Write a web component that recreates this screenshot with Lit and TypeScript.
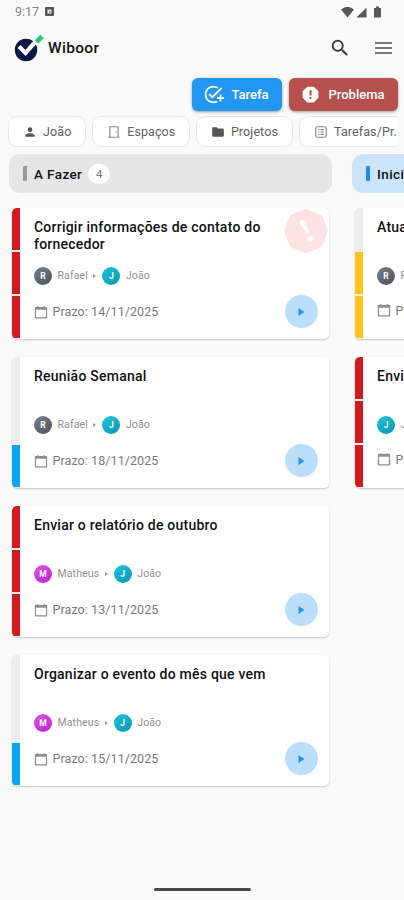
import { LitElement, html, css, svg, nothing } from "lit";
import { customElement, property } from "lit/decorators.js";
import { classMap } from "lit/directives/class-map.js";

interface Person { name: string; tone: string; }
interface Task { title: string; people: Person[]; due: string; level: number; tone: string; alert?: boolean; }

const rafael: Person = { name: "Rafael", tone: "slate" };
const joao: Person = { name: "João", tone: "cyan" };
const matheus: Person = { name: "Matheus", tone: "pink" };

const todo: Task[] = [
  { title: "Corrigir informações de contato do fornecedor", people: [rafael, joao], due: "14/11/2025", level: 3, tone: "red", alert: true },
  { title: "Reunião Semanal", people: [rafael, joao], due: "18/11/2025", level: 1, tone: "blue" },
  { title: "Enviar o relatório de outubro", people: [matheus, joao], due: "13/11/2025", level: 3, tone: "red" },
  { title: "Organizar o evento do mês que vem", people: [matheus, joao], due: "15/11/2025", level: 1, tone: "blue" },
];
const started: Task[] = [
  { title: "Atualizar o cadastro", people: [rafael, joao], due: "17/11/2025", level: 2, tone: "amber" },
  { title: "Enviar proposta", people: [joao], due: "13/11/2025", level: 3, tone: "red" },
];

const shapes = {
  person: svg`<path fill="currentColor" d="M12 12a4 4 0 1 0 0-8 4 4 0 0 0 0 8zm0 2c-2.700 0-8 1.300-8 4v2h16v-2c0-2.700-5.300-4-8-4z"/>`,
  door: svg`<path fill="none" stroke="currentColor" stroke-width="2" d="M2 21h20M5 21V3h14v18M14 12h2"/>`,
  folder: svg`<path fill="currentColor" d="M10 4H4a2 2 0 0 0-2 2v12c0 1.100.9 2 2 2h16a2 2 0 0 0 2-2V8a2 2 0 0 0-2-2h-8z"/>`,
  list: svg`<rect x="3" y="3" width="18" height="18" rx="2" fill="none" stroke="currentColor" stroke-width="2"/><path fill="none" stroke="currentColor" stroke-width="2" d="M7 8h2M11 8h6M7 12h2M11 12h6M7 16h2M11 16h6"/>`,
  calendar: svg`<path fill="none" stroke="currentColor" stroke-width="2" stroke-linejoin="round" d="M2.500 4.500h19V22h-19z"/><path fill="currentColor" d="M2 4h20v4H2zM5.500 1.500h2V5h-2zM16.500 1.500h2V5h-2z"/>`,
  addTask: svg`<path fill="currentColor" d="M22 5.180 10.590 16.600l-4.240-4.240 1.410-1.410 2.830 2.830 10-10zM12 20c-4.410 0-8-3.590-8-8s3.590-8 8-8c1.570 0 3.040.46 4.280 1.250l1.450-1.450A10.020 10.020 0 0 0 12 2C6.480 2 2 6.480 2 12s4.480 10 10 10c1.730 0 3.360-.44 4.780-1.220l-1.500-1.500c-1 .46-2.110.72-3.280.72zm7-5h-3v2h3v3h2v-3h3v-2h-3v-3h-2z"/>`,
  report: svg`<path fill="currentColor" fill-rule="evenodd" d="M15.730 3H8.270L3 8.270v7.460L8.270 21h7.460L21 15.730V8.270zM12 17.300a1.300 1.300 0 1 1 0-2.600 1.300 1.300 0 0 1 0 2.600zm1.200-4.300h-2.400V7h2.400z"/>`,
  search: svg`<path fill="currentColor" d="M15.500 14h-.79l-.28-.27A6.470 6.470 0 0 0 16 9.500 6.500 6.500 0 1 0 9.500 16c1.610 0 3.090-.59 4.230-1.570l.27.28v.79l5 4.990L20.490 19zm-6 0a4.500 4.500 0 1 1 0-9 4.500 4.500 0 0 1 0 9z"/>`,
};
const icon = (name: keyof typeof shapes) => html`<svg class="icon ${name}" viewBox="0 0 24 24">${shapes[name]}</svg>`;

@customElement("task-card")
class TaskCard extends LitElement {
  @property({ attribute: false }) task!: Task;
  @property({ type: Boolean, reflect: true }) compact = false;
  static styles = css`
    :host { display: flex; position: relative; width: 317px; height: 131px; border-radius: 5px; background: #fff; box-shadow: 0 1px 2px #00000036; }
    .level { width: 8px; flex: none; display: flex; flex-direction: column; gap: 2px; border-radius: 5px 0 0 5px; overflow: hidden; background: #fbeeee; }
    .level i { flex: 1; background: #ededed; }
    .level.blue { background: #ededed; }
    .level.amber { background: linear-gradient(#ededed 50%, #fdf3d6 50%); }
    .level.red i.on { background: #d21b20; }
    .level.blue i.on { background: #08a4f5; }
    .level.amber i.on { background: #fdc51c; }
    .body { flex: 1; padding: 11.500px 11px 0 14px; display: flex; flex-direction: column; }
    .title { height: 46.500px; width: 245px; font: 500 14px/17px Roboto, sans-serif; letter-spacing: 0.23px; color: #111; }
    .people { display: flex; align-items: center; height: 20px; font-size: 10.500px; letter-spacing: 0.12px; color: #919191; }
    .avatar { width: 18px; height: 18px; border-radius: 50%; color: #fff; font-size: 8.500px; font-weight: 700; letter-spacing: 0; display: flex; align-items: center; justify-content: center; margin-right: 5.500px; }
    .slate { background: linear-gradient(145deg, #7b818d, #4a505c); }
    .cyan { background: linear-gradient(145deg, #20c2d7, #0798b6); }
    .pink { background: linear-gradient(145deg, #de55e7, #bd20d0); }
    .sep { width: 0; height: 0; border: solid transparent; border-width: 2px 0 2px 3px; border-left-color: #999; margin: 0 6px 0 5.500px; }
    .due { display: flex; align-items: center; gap: 4.500px; margin-top: 17px; height: 18px; font-size: 12.500px; letter-spacing: 0.08px; color: #7a7a7a; }
    :host([compact]) .due { margin-top: 15.500px; }
    .icon { width: 14px; height: 14px; color: #8d8d8d; }
    .play { position: absolute; right: 11px; bottom: 10.500px; width: 33px; height: 33px; border-radius: 50%; background: #bbdefb; display: grid; place-items: center; }
    .play svg { width: 7px; height: 8px; }
    .seal { position: absolute; right: 1px; top: 1px; width: 44px; height: 44px; }
  `;
  render() {
    const t = this.task;
    return html`
      <div class=${classMap({ level: true, [t.tone]: true })}>
        ${[3, 2, 1].map((n) => html`<i class=${classMap({ on: n <= t.level })}></i>`)}
      </div>
      <div class="body">
        <div class="title">${t.title}</div>
        <div class="people">
          ${t.people.map((p, i) => html`${i ? html`<span class="sep"></span>` : nothing}<span class="avatar ${p.tone}">${p.name[0]}</span><span>${p.name}</span>`)}
        </div>
        <div class="due">${icon("calendar")}<span>Prazo: ${t.due}</span></div>
      </div>
      ${t.alert ? html`<svg class="seal" viewBox="0 0 44 44"><path fill="#fde3e2" stroke="#fde3e2" stroke-width="2" stroke-linejoin="round" d="M22 1 29.500 4 37 7 40 14 43 22 40 30 37 37 30 40 22 43 14 40 7 37 4 30 1 22 4 14 7 7 14 4z"/><path fill="#fff" d="M15.500 14c0-3 3-4 4.500-1.500l5.500 10.500-2.500 1.500z"/><circle cx="26" cy="30" r="2.700" fill="#fff"/></svg>` : nothing}
      <div class="play"><svg viewBox="0 0 7 8"><path fill="#2196f3" d="M.5 0v8l6-4z"/></svg></div>
    `;
  }
}

@customElement("app-root")
class AppRoot extends LitElement {
  static styles = css`
    :host { display: flex; flex-direction: column; width: 404px; height: 900px; background: #fafafa; overflow: hidden; font-family: Roboto, sans-serif; color: #111; }
    .status { height: 23px; flex: none; display: flex; align-items: center; padding: 0 23px 0 15px; font-size: 12.500px; color: #858585; }
    .rec { width: 9px; height: 9px; margin-left: 6px; }
    .signals { margin-left: auto; width: 40px; height: 12px; }
    .top { height: 55px; flex: none; display: flex; align-items: center; padding: 0 12.500px 6px 14px; box-sizing: border-box; }
    .logo { width: 30px; height: 28px; }
    .brand { font-size: 15.500px; font-weight: 500; letter-spacing: 0.3px; margin-left: 4px; }
    .search { width: 22px; height: 22px; margin-left: auto; color: #333; }
    .menu { width: 17px; height: 12px; margin-left: 24px; }
    .actions { display: flex; justify-content: flex-end; gap: 7px; padding-right: 6.500px; height: 33px; flex: none; }
    .btn { display: flex; align-items: center; box-sizing: border-box; border-radius: 6px; color: #fff; font-size: 13px; font-weight: 500; letter-spacing: 0; box-shadow: 0 1px 3px #0006; }
    .btn.task { width: 90px; background: #2196f3; padding-left: 11px; gap: 7.500px; }
    .btn.problem { width: 108.500px; background: #b5504d; padding-left: 11px; gap: 7.500px; }
    .addTask { width: 21px; height: 21px; }
    .report { width: 21px; height: 21px; }
    .chips { display: flex; gap: 6.200px; margin: 5px 7px 0 8px; height: 31px; flex: none; overflow: hidden; }
    .chip { flex: none; box-sizing: border-box; display: flex; align-items: center; border: 1px solid #e9e9e9; border-radius: 9px; background: #fff; color: #606060; font-size: 12.500px; letter-spacing: 0.1px; padding-left: 14px; gap: 6px; }
    .chip .icon { width: 14px; height: 14px; color: #555; }
    .chip .door, .chip .list { color: #888; }
    .c1 { width: 78px; } .c2 { width: 97.500px; } .c3 { width: 97px; } .c4 { width: 130px; }
    .board { display: flex; gap: 20px; padding: 7px 0 0 9px; flex: 1; min-height: 0; }
    .column { width: 323px; flex: none; }
    .head { height: 39px; border-radius: 11px; background: #e6e6e6; display: flex; align-items: center; padding-left: 14px; box-sizing: border-box; font-size: 13.500px; font-weight: 500; letter-spacing: 0.4px; }
    .head.active { background: #cce4f9; }
    .mark { width: 4px; height: 15px; border-radius: 1px; background: #999; margin-right: 7px; }
    .active .mark { background: #2089ec; }
    .count { width: 22px; height: 20px; border-radius: 10px; background: #fff; margin-left: 6px; color: #777; font-size: 11.500px; font-weight: 400; letter-spacing: 0; display: grid; place-items: center; }
    .cards { display: flex; flex-direction: column; gap: 18px; padding: 14.500px 0 0 3px; }
    .home { width: 97px; height: 3px; border-radius: 2px; background: #484848; margin: 0 auto 9px; flex: none; }
  `;
  column(name: string, tasks: Task[], active = false) {
    return html`<div class="column">
      <div class=${classMap({ head: true, active })}><span class="mark"></span>${name}${active ? nothing : html`<span class="count">${tasks.length}</span>`}</div>
      <div class="cards">${tasks.map((t) => html`<task-card .task=${t} ?compact=${active}></task-card>`)}</div>
    </div>`;
  }
  render() {
    return html`
      <div class="status"><span>9:17</span>
        <svg class="rec" viewBox="0 0 9 9"><rect width="9" height="9" rx="1" fill="#555"/><path fill="#eee" d="M2.500 2.500h4v4h-4z"/><path fill="#777" d="M4 4h1.500v1.500H4z"/></svg>
        <svg class="signals" viewBox="0 0 40 12"><path fill="#585858" d="M0 3.500Q6.500-2 13 3.500L6.500 11.500zM15.500 11.500l10-10v10zM33 2h2V.500h3V2h2v9.500h-7z"/></svg>
      </div>
      <div class="top">
        <svg class="logo" viewBox="0 0 30 28"><circle cx="12" cy="16" r="11.200" fill="#0b1648"/><path fill="none" stroke="#fafafa" stroke-width="4.200" d="M5 12.500 11.500 19 23 6"/><path stroke="#22c87a" stroke-width="4.800" stroke-linejoin="round" d="M22.500 8 28 2.500"/></svg>
        <span class="brand">Wiboor</span>
        <svg class="search" viewBox="0 0 24 24">${shapes.search}</svg>
        <svg class="menu" viewBox="0 0 17 12"><path stroke="#505050" stroke-width="1.500" d="M0 1h17M0 6h17M0 11h17"/></svg>
      </div>
      <div class="actions">
        <div class="btn task">${icon("addTask")}<span>Tarefa</span></div>
        <div class="btn problem">${icon("report")}<span>Problema</span></div>
      </div>
      <div class="chips">
        <div class="chip c1">${icon("person")}João</div>
        <div class="chip c2">${icon("door")}Espaços</div>
        <div class="chip c3">${icon("folder")}Projetos</div>
        <div class="chip c4">${icon("list")}Tarefas/Pr.</div>
      </div>
      <div class="board">${this.column("A Fazer", todo)}${this.column("Iniciado", started, true)}</div>
      <div class="home"></div>
    `;
  }
}
